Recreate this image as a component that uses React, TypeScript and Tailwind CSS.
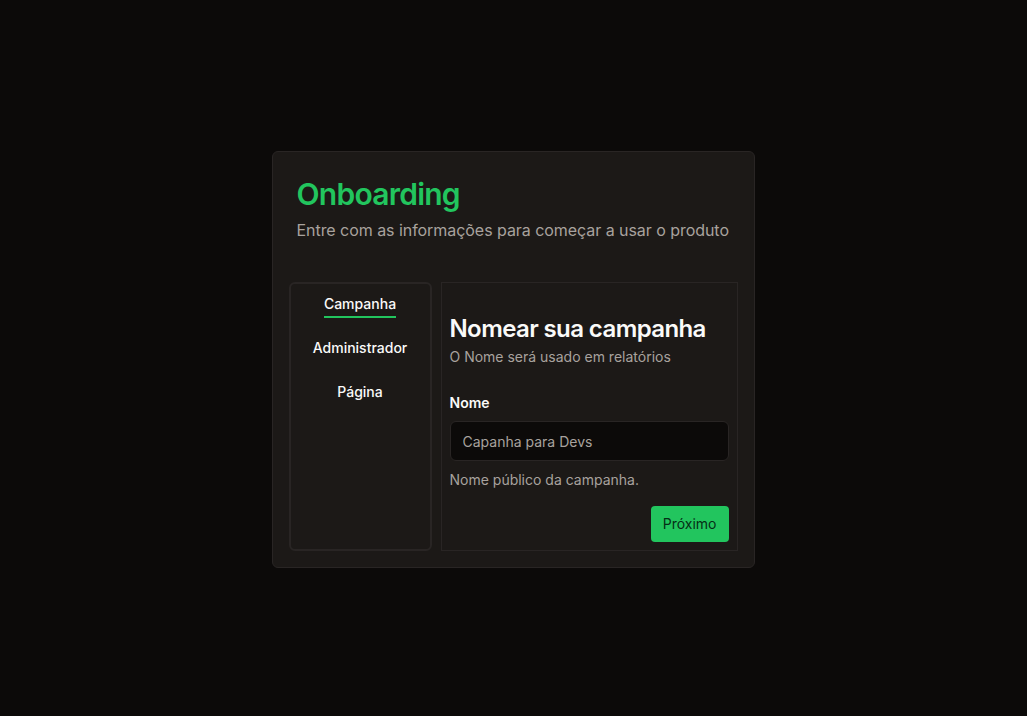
import React, { useState } from 'react';

const tabs = ['Campanha', 'Administrador', 'Página'];

export default function App() {
  const [active, setActive] = useState('Campanha');
  const [name, setName] = useState('');

  return (
    <div
      className="min-h-screen bg-[#0c0a09] flex items-center justify-center"
      style={{ fontFamily: 'Inter, "Noto Sans", sans-serif' }}
    >
      <div className="w-[483px] mt-[3px] mr-[1px] bg-[#1c1917] border border-[#292524] rounded-md">
        <div className="px-6 pt-6 pb-10">
          <h1 className="text-3xl font-semibold tracking-tight text-[#22c55e] leading-9">Onboarding</h1>
          <p className="mt-1.5 text-base leading-6 text-[#a8a29e] whitespace-nowrap tracking-[-0.05px]">
            Entre com as informações para começar a usar o produto
          </p>
        </div>

        <div className="flex gap-[9px] px-4 pb-4">
          <div className="w-[143px] shrink-0 border-2 border-[#292524] rounded-md pt-[10px] flex flex-col items-center gap-5">
            {tabs.map(t => (
              <button
                key={t}
                type="button"
                onClick={() => setActive(t)}
                className={`text-sm font-medium leading-5 text-[#fafaf9] ${
                  active === t ? 'border-b-2 border-[#22c55e] pb-0.5' : 'pb-1'
                }`}
              >
                {t}
              </button>
            ))}
          </div>

          <div className="flex-1 border border-[#292524] px-2 pt-[30px] pb-2">
            <h2 className="text-2xl font-semibold tracking-tight leading-8 text-[#fafaf9]">Nomear sua campanha</h2>
            <p className="mt-0.5 text-sm leading-5 text-[#a8a29e]">O Nome será usado em relatórios</p>

            <label className="block mt-[26px] text-sm font-semibold leading-5 text-[#fafaf9]">Nome</label>
            <input
              value={name}
              onChange={e => setName(e.target.value)}
              placeholder="Capanha para Devs"
              className="mt-2 w-full h-10 rounded-md border border-[#292524] bg-[#0c0a09] px-3 text-sm text-[#fafaf9] placeholder:text-[#a8a29e] outline-none"
            />
            <p className="mt-[9px] text-sm leading-5 text-[#a8a29e]">Nome público da campanha.</p>

            <div className="flex justify-end mt-4">
              <button
                type="button"
                className="h-9 px-3 rounded bg-[#22c55e] text-sm text-[#052e16] font-normal"
              >
                Próximo
              </button>
            </div>
          </div>
        </div>
      </div>
    </div>
  );
}
